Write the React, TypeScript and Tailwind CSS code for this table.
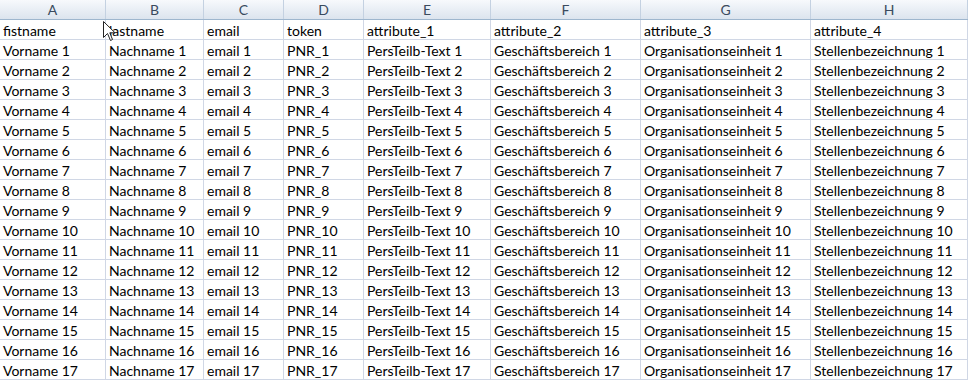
const columns = ["A", "B", "C", "D", "E", "F", "G", "H"];

const headerRow = [
  "fistname",
  "lastname",
  "email",
  "token",
  "attribute_1",
  "attribute_2",
  "attribute_3",
  "attribute_4",
];

const rows = Array.from({ length: 17 }, (_, i) => {
  const n = i + 1;
  return [
    `Vorname ${n}`,
    `Nachname ${n}`,
    `email ${n}`,
    `PNR_${n}`,
    `PersTeilb-Text ${n}`,
    `Geschäftsbereich ${n}`,
    `Organisationseinheit ${n}`,
    `Stellenbezeichnung ${n}`,
  ];
});

const gridCols = "grid grid-cols-[106px_98px_80px_80px_127px_150px_170px_1fr]";

function Cursor() {
  return (
    <svg
      className="absolute left-[103px] top-[21px] pointer-events-none"
      width="13"
      height="21"
      viewBox="0 0 13 21"
    >
      <path
        d="M0.5 0.5 L0.5 16.5 L4.5 12.5 L7.5 19.5 L9.5 18.5 L6.8 11.8 L12 11.8 Z"
        fill="#fff"
        stroke="#222"
        strokeWidth="1"
        strokeLinejoin="round"
      />
    </svg>
  );
}

export default function App() {
  return (
    <div className="relative w-[968px] h-[382px] overflow-hidden bg-white font-['Lato',sans-serif] text-[14px] text-black">
      {/* Column headers */}
      <div className={`${gridCols} h-5 bg-gradient-to-b from-[#f7f9fc] to-[#dce4ee] border-b border-[#9eb6ce]`}>
        {columns.map((c) => (
          <div
            key={c}
            className="flex items-center justify-center border-r border-[#c4d1e1] text-[#3a4a5e] leading-none"
          >
            {c}
          </div>
        ))}
      </div>

      {/* Cells */}
      {[headerRow, ...rows].map((row, r) => (
        <div key={r} className={`${gridCols} h-5`}>
          {row.map((cell, c) => (
            <div
              key={c}
              className="flex items-end pb-[1px] pl-[3px] border-r border-b border-[#d0d7e5] whitespace-nowrap overflow-hidden leading-none"
            >
              {cell}
            </div>
          ))}
        </div>
      ))}

      <Cursor />
    </div>
  );
}
